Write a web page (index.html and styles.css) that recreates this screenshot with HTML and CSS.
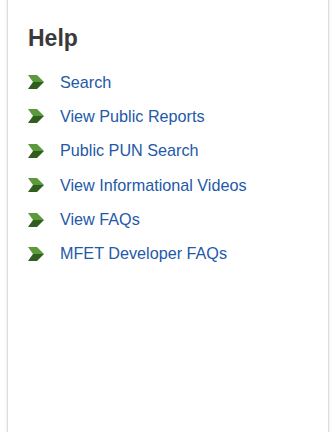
FILE: index.html
```html
<!DOCTYPE html>
<html lang="en">
<head>
    <meta charset="UTF-8">
    <title>Help</title>
    <link rel="stylesheet" href="styles.css">
</head>
<body>
    <div class="panel">
        <h2>Help</h2>
        <ul class="links">
            <li><svg class="arrow" viewBox="0 0 16 16"><polygon class="top" points="0,1 9,1 16,8 5,8"/><polygon class="bottom" points="5,8 16,8 9,15 0,15"/></svg><a href="#">Search</a></li>
            <li><svg class="arrow" viewBox="0 0 16 16"><polygon class="top" points="0,1 9,1 16,8 5,8"/><polygon class="bottom" points="5,8 16,8 9,15 0,15"/></svg><a href="#">View Public Reports</a></li>
            <li><svg class="arrow" viewBox="0 0 16 16"><polygon class="top" points="0,1 9,1 16,8 5,8"/><polygon class="bottom" points="5,8 16,8 9,15 0,15"/></svg><a href="#">Public PUN Search</a></li>
            <li><svg class="arrow" viewBox="0 0 16 16"><polygon class="top" points="0,1 9,1 16,8 5,8"/><polygon class="bottom" points="5,8 16,8 9,15 0,15"/></svg><a href="#">View Informational Videos</a></li>
            <li><svg class="arrow" viewBox="0 0 16 16"><polygon class="top" points="0,1 9,1 16,8 5,8"/><polygon class="bottom" points="5,8 16,8 9,15 0,15"/></svg><a href="#">View FAQs</a></li>
            <li><svg class="arrow" viewBox="0 0 16 16"><polygon class="top" points="0,1 9,1 16,8 5,8"/><polygon class="bottom" points="5,8 16,8 9,15 0,15"/></svg><a href="#">MFET Developer FAQs</a></li>
        </ul>
    </div>
</body>
</html>
```

FILE: styles.css
```css
body {
    margin: 0;
    padding: 0;
    background-color: #fff;
    font-family: "Liberation Sans", Arial, sans-serif;
}

.panel {
    margin: 0 4px 0 7px;
    min-height: 432px;
    box-sizing: border-box;
    border-left: 1px solid #ddd;
    border-right: 1px solid #ddd;
    box-shadow: 0 0 3px rgba(0, 0, 0, 0.12);
    padding: 26px 20px 0 20px;
}

h2 {
    margin: 0 0 21px 0;
    font-size: 23px;
    line-height: 24px;
    font-weight: bold;
    color: #3a3a3a;
}

.links {
    list-style: none;
    margin: 0;
    padding: 0;
}

.links li {
    display: flex;
    align-items: center;
    height: 22px;
    margin-bottom: 12.4px;
}

.arrow {
    width: 16px;
    height: 16px;
    margin-right: 16px;
    flex-shrink: 0;
}

.arrow .top {
    fill: #5b9a3c;
}

.arrow .bottom {
    fill: #2f5e1f;
}

.links a {
    color: #2459a8;
    font-size: 16.2px;
    text-decoration: none;
}
```
